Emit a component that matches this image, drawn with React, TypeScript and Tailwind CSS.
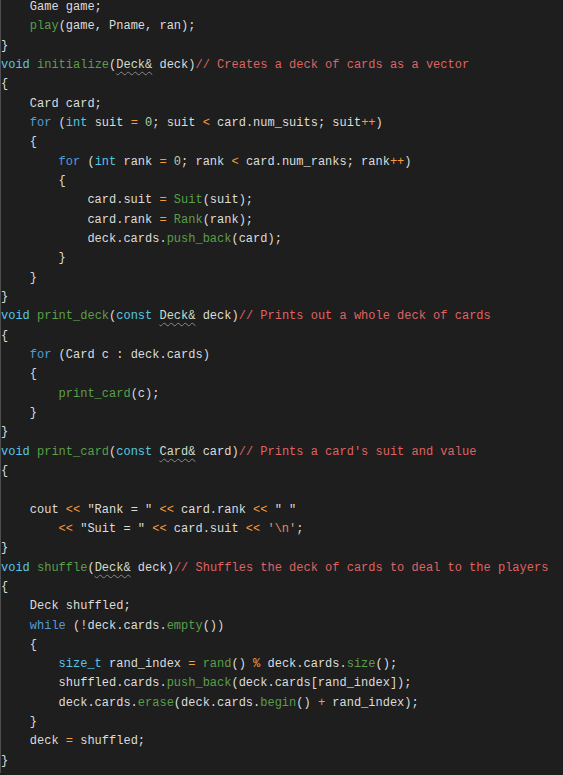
import React from "react";

// Small token helpers for the syntax colours.
const Kw = ({ children }: { children: React.ReactNode }) => (
  <span className="text-[#569cd6]">{children}</span>
);
const Ty = ({ children }: { children: React.ReactNode }) => (
  <span className="text-[#56c6e6]">{children}</span>
);
const Fn = ({ children }: { children: React.ReactNode }) => (
  <span className="text-[#5a9e4a]">{children}</span>
);
const Op = ({ children }: { children: React.ReactNode }) => (
  <span className="text-[#f89c3a]">{children}</span>
);
const Num = ({ children }: { children: React.ReactNode }) => (
  <span className="text-[#b5cea8]">{children}</span>
);
const Cm = ({ children }: { children: React.ReactNode }) => (
  <span className="text-[#df6363]">{children}</span>
);
const Sq = ({ children }: { children: React.ReactNode }) => (
  <span className="text-[#cfdcc8] underline decoration-wavy decoration-[#8a8a8a] decoration-1 underline-offset-[3px]">
    {children}
  </span>
);

const lines: React.ReactNode[] = [
  <>{"    Game game;"}</>,
  <>{"    "}<Fn>play</Fn>{"(game, Pname, ran);"}</>,
  <>{"}"}</>,
  <><Ty>void</Ty>{" "}<Fn>initialize</Fn>{"("}<Sq>Deck&</Sq>{" deck)"}<Cm>{"// Creates a deck of cards as a vector"}</Cm></>,
  <>{"{"}</>,
  <>{"    Card card;"}</>,
  <>{"    "}<Kw>for</Kw>{" ("}<Ty>int</Ty>{" suit "}<Op>=</Op>{" "}<Num>0</Num>{"; suit "}<Op>{"<"}</Op>{" card.num_suits; suit"}<Op>++</Op>{")"}</>,
  <>{"    {"}</>,
  <>{"        "}<Kw>for</Kw>{" ("}<Ty>int</Ty>{" rank "}<Op>=</Op>{" "}<Num>0</Num>{"; rank "}<Op>{"<"}</Op>{" card.num_ranks; rank"}<Op>++</Op>{")"}</>,
  <>{"        {"}</>,
  <>{"            card.suit "}<Op>=</Op>{" "}<Fn>Suit</Fn>{"(suit);"}</>,
  <>{"            card.rank "}<Op>=</Op>{" "}<Fn>Rank</Fn>{"(rank);"}</>,
  <>{"            deck.cards."}<Fn>push_back</Fn>{"(card);"}</>,
  <>{"        }"}</>,
  <>{"    }"}</>,
  <>{"}"}</>,
  <><Ty>void</Ty>{" "}<Fn>print_deck</Fn>{"("}<Ty>const</Ty>{" "}<Sq>Deck&</Sq>{" deck)"}<Cm>{"// Prints out a whole deck of cards"}</Cm></>,
  <>{"{"}</>,
  <>{"    "}<Kw>for</Kw>{" (Card c : deck.cards)"}</>,
  <>{"    {"}</>,
  <>{"        "}<Fn>print_card</Fn>{"(c);"}</>,
  <>{"    }"}</>,
  <>{"}"}</>,
  <><Ty>void</Ty>{" "}<Fn>print_card</Fn>{"("}<Ty>const</Ty>{" "}<Sq>Card&</Sq>{" card)"}<Cm>{"// Prints a card's suit and value"}</Cm></>,
  <>{"{"}</>,
  <>{" "}</>,
  <>{"    cout "}<Op>{"<<"}</Op>{' "Rank = " '}<Op>{"<<"}</Op>{" card.rank "}<Op>{"<<"}</Op>{' " "'}</>,
  <>{"        "}<Op>{"<<"}</Op>{' "Suit = " '}<Op>{"<<"}</Op>{" card.suit "}<Op>{"<<"}</Op>{" "}<span className="text-[#d69d85]">'</span><span className="text-[#e08a4e]">\n</span><span className="text-[#d69d85]">'</span>{";"}</>,
  <>{"}"}</>,
  <><Ty>void</Ty>{" "}<Fn>shuffle</Fn>{"("}<Sq>Deck&</Sq>{" deck)"}<Cm>{"// Shuffles the deck of cards to deal to the players"}</Cm></>,
  <>{"{"}</>,
  <>{"    Deck shuffled;"}</>,
  <>{"    "}<Kw>while</Kw>{" (!deck.cards."}<Fn>empty</Fn>{"())"}</>,
  <>{"    {"}</>,
  <>{"        "}<Ty>size_t</Ty>{" rand_index "}<Op>=</Op>{" "}<Fn>rand</Fn>{"() "}<Op>%</Op>{" deck.cards."}<Fn>size</Fn>{"();"}</>,
  <>{"        shuffled.cards."}<Fn>push_back</Fn>{"(deck.cards[rand_index]);"}</>,
  <>{"        deck.cards."}<Fn>erase</Fn>{"(deck.cards."}<Fn>begin</Fn>{"() "}<Op>+</Op>{" rand_index);"}</>,
  <>{"    }"}</>,
  <>{"    deck "}<Op>=</Op>{" shuffled;"}</>,
  <>{"}"}</>,
];

export default function App() {
  return (
    <div className="w-[563px] h-[775px] overflow-hidden bg-[#1e1e1e]">
      <div className="h-full border-l border-[#4e4e4e]">
        <div
          className="-mt-[2px] text-[12px] leading-[19.33px] text-[#dcdcdc] whitespace-pre"
          style={{ fontFamily: '"Liberation Mono", "DejaVu Sans Mono", monospace' }}
        >
          {lines.map((line, i) => (
            <div key={i} className="h-[19.33px]">
              {line}
            </div>
          ))}
        </div>
      </div>
    </div>
  );
}
